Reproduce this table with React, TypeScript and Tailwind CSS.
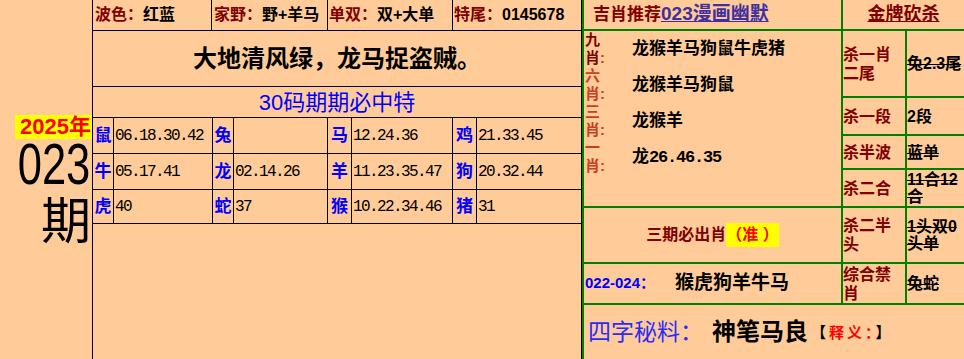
import React from "react";

const GRID = [
  [["鼠", "06.18.30.42"], ["兔", ""], ["马", "12.24.36"], ["鸡", "21.33.45"]],
  [["牛", "05.17.41"], ["龙", "02.14.26"], ["羊", "11.23.35.47"], ["狗", "20.32.44"]],
  [["虎", "40"], ["蛇", "37"], ["猴", "10.22.34.46"], ["猪", "31"]],
];

// widths of the [zodiac, numbers] cell pairs, last numbers cell fills the rest
const COLS = [
  ["w-[21px]", "w-[99px]"],
  ["w-[21px]", "w-[94px]"],
  ["w-[24px]", "w-[101px]"],
  ["w-[24px]", "flex-1"],
];

const ROW_H = ["h-[36px]", "h-[36px]", "h-[34px]"];

const PICKS = [
  { top: "九", color: "text-[#800000]", text: "龙猴羊马狗鼠牛虎猪" },
  { top: "六", color: "text-[#c8401e]", text: "龙猴羊马狗鼠" },
  { top: "三", color: "text-[#c8401e]", text: "龙猴羊" },
  { top: "一", color: "text-[#c8401e]", text: "龙", nums: "26.46.35" },
];

const KILLS = [
  { label: "杀一肖二尾", value: "兔2.3尾", row: "row-start-2", strike: true },
  { label: "杀一段", value: "2段", row: "row-start-3", strike: false },
  { label: "杀半波", value: "蓝单", row: "row-start-4", strike: true },
  { label: "杀二合", value: "11合12合", row: "row-start-5", strike: true },
  { label: "杀二半头", value: "1头双0头单", row: "row-start-6", strike: true },
  { label: "综合禁肖", value: "兔蛇", row: "row-start-7", strike: true },
];

const mono = "font-['Liberation_Mono',monospace] tracking-[-1.6px]";

const App = () => {
  return (
    <div className="flex w-[964px] h-[359px] overflow-hidden bg-[#ffcc99] text-black font-['Liberation_Sans','Noto_Sans_CJK_SC',sans-serif]">
      {/* issue number */}
      <div className="w-[92px] flex flex-col items-end pt-[115px]">
        <div className="bg-[#ffff00] text-[#ff0000] font-bold text-[22px] leading-[24px] pl-[2px] pr-[1px] w-[77px] text-right">
          2025年
        </div>
        <div className="text-[58px] leading-[46px] mt-[2px] pr-[2px] scale-x-[0.75] origin-right">023</div>
        <div className="text-[50px] leading-[50px] mt-[5px] pr-[1px] font-['Noto_Sans_CJK_SC',sans-serif]">期</div>
      </div>

      {/* middle table */}
      <div className="w-[490px] flex flex-col border-x border-black">
        <div className="flex h-[31px] border-b border-black text-[16px] font-bold">
          <div className="w-[119px] border-r border-black flex items-center pl-[2px]">
            <span className="text-[#800000]">波色：</span>红蓝
          </div>
          <div className="w-[116px] border-r border-black flex items-center pl-[2px]">
            <span className="text-[#800000]">家野：</span>野+羊马
          </div>
          <div className="w-[125px] border-r border-black flex items-center pl-[1px]">
            <span className="text-[#800000]">单双：</span>双+大单
          </div>
          <div className="flex-1 flex items-center pl-[1px]">
            <span className="text-[#800000]">特尾：</span>0145678
          </div>
        </div>
        <div className="h-[56px] border-b border-black flex items-center justify-center text-[24px] font-bold">
          大地清风绿，龙马捉盗贼。
        </div>
        <div className="h-[31px] border-b border-black flex items-center justify-center text-[22px] text-[#0000ff]">
          30码期期必中特
        </div>
        {GRID.map((row, r) => (
          <div key={r} className={`flex border-b border-black ${ROW_H[r]}`}>
            {row.map(([z, n], c) => (
              <React.Fragment key={c}>
                <div
                  className={`${COLS[c][0]} border-r border-black flex items-center justify-center text-[17px] font-bold text-[#0000ff]`}
                >
                  {z}
                </div>
                <div
                  className={`${COLS[c][1]} ${c < 3 ? "border-r border-black" : ""} flex items-center pl-[1px] text-[16px] ${mono}`}
                >
                  {n}
                </div>
              </React.Fragment>
            ))}
          </div>
        ))}
        <div className="flex-1" />
      </div>

      {/* right panel */}
      <div className="flex-1 border-l-2 border-[#008000] bg-[#008000] grid grid-cols-[257px_62px_57px] grid-rows-[29px_65px_36px_32px_36px_54px_39px_54px] gap-[2px]">
        <div className="bg-[#ffcc99] flex items-center pl-[9px] font-bold">
          <span className="text-[17px] text-[#800000]">吉肖推荐</span>
          <span className="text-[19px] text-[#3f2f9f] underline">023漫画幽默</span>
        </div>
        <div className="col-span-2 bg-[#ffcc99] flex items-center justify-center text-[18px] font-bold text-[#800000] underline">
          金牌砍杀
        </div>

        <div className="row-span-4 bg-[#ffcc99] flex flex-col">
          {PICKS.map((p) => (
            <div key={p.top} className="h-[36px] flex items-center">
              <div className={`w-[23px] pl-[1px] text-[15px] leading-[18px] font-bold ${p.color}`}>
                {p.top}
                <br />
                <span className={p.color}>肖</span>
                <span className="text-[#c8401e]">:</span>
              </div>
              <div className="ml-[25px] text-[17px] font-bold">
                {p.text}
                {p.nums && <span className="font-['Liberation_Mono',monospace] tracking-[-1.2px]">{p.nums}</span>}
              </div>
            </div>
          ))}
        </div>

        {KILLS.map((k) => (
          <React.Fragment key={k.label}>
            <div className={`${k.row} col-start-2 bg-[#ffcc99] flex items-center text-[16px] leading-[19px] font-bold text-[#800000]`}>
              <span>{k.label}</span>
            </div>
            <div
              className={`${k.row} col-start-3 bg-[#ffcc99] flex items-center text-[16px] leading-[17px] font-bold break-all overflow-hidden ${k.strike ? "line-through" : ""}`}
            >
              <span className="whitespace-normal">{k.value}</span>
            </div>
          </React.Fragment>
        ))}

        <div className="row-start-6 col-start-1 bg-[#ffcc99] flex items-center justify-center text-[16px] font-bold">
          <span className="text-[#800000]">三期必出肖</span>
          <span className="bg-[#ffff00] text-[#ff0000] whitespace-pre">（准 ）</span>
        </div>
        <div className="row-start-7 col-start-1 bg-[#ffcc99] flex items-center pl-[1px]">
          <span className="text-[15px] font-bold text-[#0000ff]">022-024：</span>
          <span className="ml-[20px] text-[19px] font-bold">猴虎狗羊牛马</span>
        </div>

        <div className="row-start-8 col-span-3 bg-[#ffcc99] flex items-center pl-[4px]">
          <span className="text-[23px] text-[#2a2aff]">四字秘料：</span>
          <span className="ml-[9px] text-[24px] font-bold">神笔马良</span>
          <span className="ml-[3px] text-[15px] tracking-[3px] font-bold font-['Noto_Sans_CJK_SC',sans-serif]">
            【<span className="text-[#ff0000]">释义：</span>】
          </span>
        </div>
      </div>
    </div>
  );
};

export default App;
